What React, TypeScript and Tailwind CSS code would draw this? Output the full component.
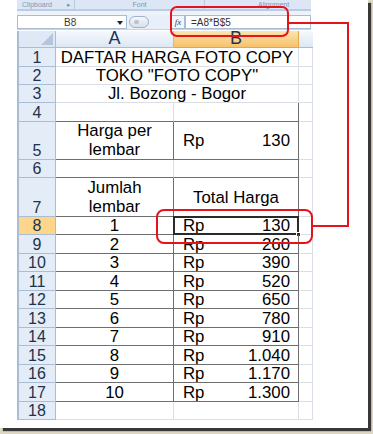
import React from "react";

type Row = {
  n: number;
  h: string;
  kind: "title" | "empty" | "price" | "head" | "item";
  text?: string;
  qty?: number;
  bottomDark?: boolean;
};

const rows: Row[] = [
  { n: 1, h: "h-[19px]", kind: "title", text: "DAFTAR HARGA FOTO COPY" },
  { n: 2, h: "h-[18px]", kind: "title", text: 'TOKO "FOTO COPY"' },
  { n: 3, h: "h-[18px]", kind: "title", text: "Jl. Bozong - Bogor" },
  { n: 4, h: "h-[19px]", kind: "empty", bottomDark: true },
  { n: 5, h: "h-[38px]", kind: "price" },
  { n: 6, h: "h-[18px]", kind: "empty", bottomDark: true },
  { n: 7, h: "h-[39px]", kind: "head" },
  ...Array.from({ length: 10 }, (_, i) => ({
    n: 8 + i,
    h: i === 0 ? "h-[18px]" : "h-[18.5px]",
    kind: "item" as const,
    qty: i + 1,
  })),
  { n: 18, h: "h-[18px]", kind: "empty" },
];

const rupiah = (v: number) => v.toLocaleString("de-DE");

function RowHeader({ n }: { n: number }) {
  const selected = n === 8;
  return (
    <div
      className={`w-[37px] shrink-0 flex items-end justify-center border-r border-b border-[#a9bdd4] text-[16px] leading-[17px] text-[#22324b] ${
        selected ? "bg-[#fdd68c]" : "bg-[#e4ecf7]"
      }`}
    >
      {n}
    </div>
  );
}

function Amount({ value }: { value: string }) {
  return (
    <div className="flex w-full justify-between pl-[9px] pr-[8px]">
      <span>Rp</span>
      <span>{value}</span>
    </div>
  );
}

function SheetRow({ row }: { row: Row }) {
  const grid = "border-[#dadfe7]";
  const dark = "border-[#6e6e6e]";
  const colC = (
    <div className={`w-[14px] shrink-0 border-r border-b ${grid}`} />
  );

  let cells: React.ReactNode;
  if (row.kind === "title") {
    cells = (
      <div className={`w-[243px] shrink-0 flex items-end justify-center border-r border-b ${grid}`}>
        {row.text}
      </div>
    );
  } else if (row.kind === "empty") {
    const b = row.bottomDark ? dark : grid;
    cells = (
      <>
        <div className={`w-[118px] shrink-0 border-b border-r ${grid} ${row.bottomDark ? "border-b-[#6e6e6e]" : ""}`} />
        <div className={`w-[125px] shrink-0 border-b border-r ${b}`} />
      </>
    );
  } else if (row.kind === "price") {
    cells = (
      <>
        <div className={`w-[118px] shrink-0 flex flex-col items-center justify-center border-b border-r ${dark} leading-[18.5px]`}>
          <span>Harga per</span>
          <span>lembar</span>
        </div>
        <div className={`w-[125px] shrink-0 flex items-center border-b border-r ${dark}`}>
          <Amount value="130" />
        </div>
      </>
    );
  } else if (row.kind === "head") {
    cells = (
      <>
        <div className={`w-[118px] shrink-0 flex flex-col items-center justify-center border-b border-r ${dark} leading-[18.5px] pt-[1px]`}>
          <span>Jumlah</span>
          <span>lembar</span>
        </div>
        <div className={`w-[125px] shrink-0 flex items-center justify-center border-b border-r ${dark}`}>
          Total Harga
        </div>
      </>
    );
  } else {
    const q = row.qty ?? 0;
    cells = (
      <>
        <div className={`w-[118px] shrink-0 flex items-end justify-center border-b border-r ${dark}`}>
          {q}
        </div>
        <div className={`relative w-[125px] shrink-0 flex items-end border-b border-r ${dark}`}>
          <Amount value={rupiah(q * 130)} />
          {row.n === 8 && (
            <>
              <span className="absolute -left-[1px] -top-[1px] -right-[1px] -bottom-[1px] border-2 border-[#2a2a2a]" />
              <span className="absolute -right-[3px] -bottom-[3px] w-[5px] h-[5px] bg-[#2a2a2a] border border-white" />
            </>
          )}
        </div>
      </>
    );
  }

  return (
    <div className={`flex ${row.h} leading-[17px]`}>
      <RowHeader n={row.n} />
      {cells}
      {colC}
    </div>
  );
}

function Ribbon() {
  return (
    <div className="h-[15px] flex flex-col">
      <div className="h-[9px] bg-[#dce6f4] flex overflow-hidden text-[7px] leading-[9px] text-[#8197b8] font-['Liberation_Sans',sans-serif]">
        <div className="w-[58px] pl-[5px] border-r border-[#b9cbe3] flex justify-between pr-[3px]">
          <span>Clipboard</span>
          <span>▸</span>
        </div>
        <div className="w-[130px] border-r border-[#b9cbe3] text-center">Font</div>
        <div className="flex-1 pl-[53px]">Alignment</div>
      </div>
      <div className="h-[2px] bg-[#b8cce6]" />
      <div className="h-[4px] bg-[#eef3fa]" />
    </div>
  );
}

function FormulaBar() {
  return (
    <div className="h-[15px] flex bg-[#e9eff8] border-b border-[#c3d3e8] font-['Liberation_Sans',sans-serif] text-[10px] leading-[13px] text-[#333]">
      <div className="w-[110px] shrink-0 bg-white border border-[#a7bcd6] flex items-center relative">
        <span className="absolute left-[46px] top-[0px] text-[#3a3a3a]">B8</span>
        <svg className="absolute right-[3px] top-[5px]" width="6" height="4" viewBox="0 0 6 4">
          <path d="M0 0H6L3 4Z" fill="#222" />
        </svg>
      </div>
      <div className="w-[44px] shrink-0 relative">
        <div className="absolute left-[2px] top-[1px] w-[20px] h-[12px] rounded-full border border-[#9fb3cc] bg-gradient-to-b from-[#f6f8fb] to-[#d7e0ec]">
          <span className="absolute left-[4px] top-[3px] w-[5px] h-[4px] rounded-full bg-[#b8c4d4]" />
        </div>
      </div>
      <div className="w-[14px] shrink-0 bg-[#f3f6fb] border border-[#a7bcd6] flex items-center justify-center italic font-['Liberation_Serif',serif] text-[9px] text-[#444]">
        fx
      </div>
      <div className="flex-1 bg-white border border-[#a7bcd6] pl-[5px] flex items-center">=A8*B$5</div>
    </div>
  );
}

function ColumnHeaders() {
  return (
    <div className="flex h-[17px] text-[18px] leading-[17px] text-[#1f3557] font-['Liberation_Sans',sans-serif]">
      <div className="w-[37px] shrink-0 relative bg-[#dfe8f5] border-r border-b border-[#a9bdd4]">
        <svg className="absolute right-[2px] bottom-[2px]" width="12" height="12" viewBox="0 0 12 12">
          <path d="M12 0V12H0Z" fill="#b5c6dc" />
        </svg>
      </div>
      <div className="w-[118px] shrink-0 flex items-end justify-center bg-gradient-to-b from-[#f6f9fd] to-[#dde7f4] border-r border-b border-[#a9bdd4]">
        A
      </div>
      <div className="w-[125px] shrink-0 flex items-end justify-center bg-gradient-to-b from-[#fde4ae] to-[#f6c26a] border-r border-b border-[#e1a948]">
        B
      </div>
      <div className="w-[14px] shrink-0 bg-gradient-to-b from-[#f6f9fd] to-[#dde7f4] border-b border-[#a9bdd4]" />
    </div>
  );
}

export default function App() {
  return (
    <div className="w-[373px] h-[434px] bg-[#dcd6c2] overflow-hidden">
      <div className="relative w-[368px] h-[428px] bg-white shadow-[3px_3px_1px_#383838]">
        <div className="ml-[17px] w-[294px] font-['Liberation_Sans',Arial,sans-serif] text-[16.8px] text-black">
          <Ribbon />
          <FormulaBar />
          <div className="h-[1px]" />
          <div className="border-l-2 border-[#a9bdd4]">
            <ColumnHeaders />
            {rows.map((r) => (
              <SheetRow key={r.n} row={r} />
            ))}
          </div>
        </div>

        <svg className="absolute inset-0 pointer-events-none" width="368" height="428" viewBox="0 0 368 428">
          <g fill="none" stroke="#e5141b" strokeWidth="2">
            <rect x="171" y="7" width="117" height="29" rx="6" />
            <path d="M288 23H348V226H312" />
            <rect x="157" y="210" width="155" height="33" rx="7" />
          </g>
        </svg>
      </div>
    </div>
  );
}
